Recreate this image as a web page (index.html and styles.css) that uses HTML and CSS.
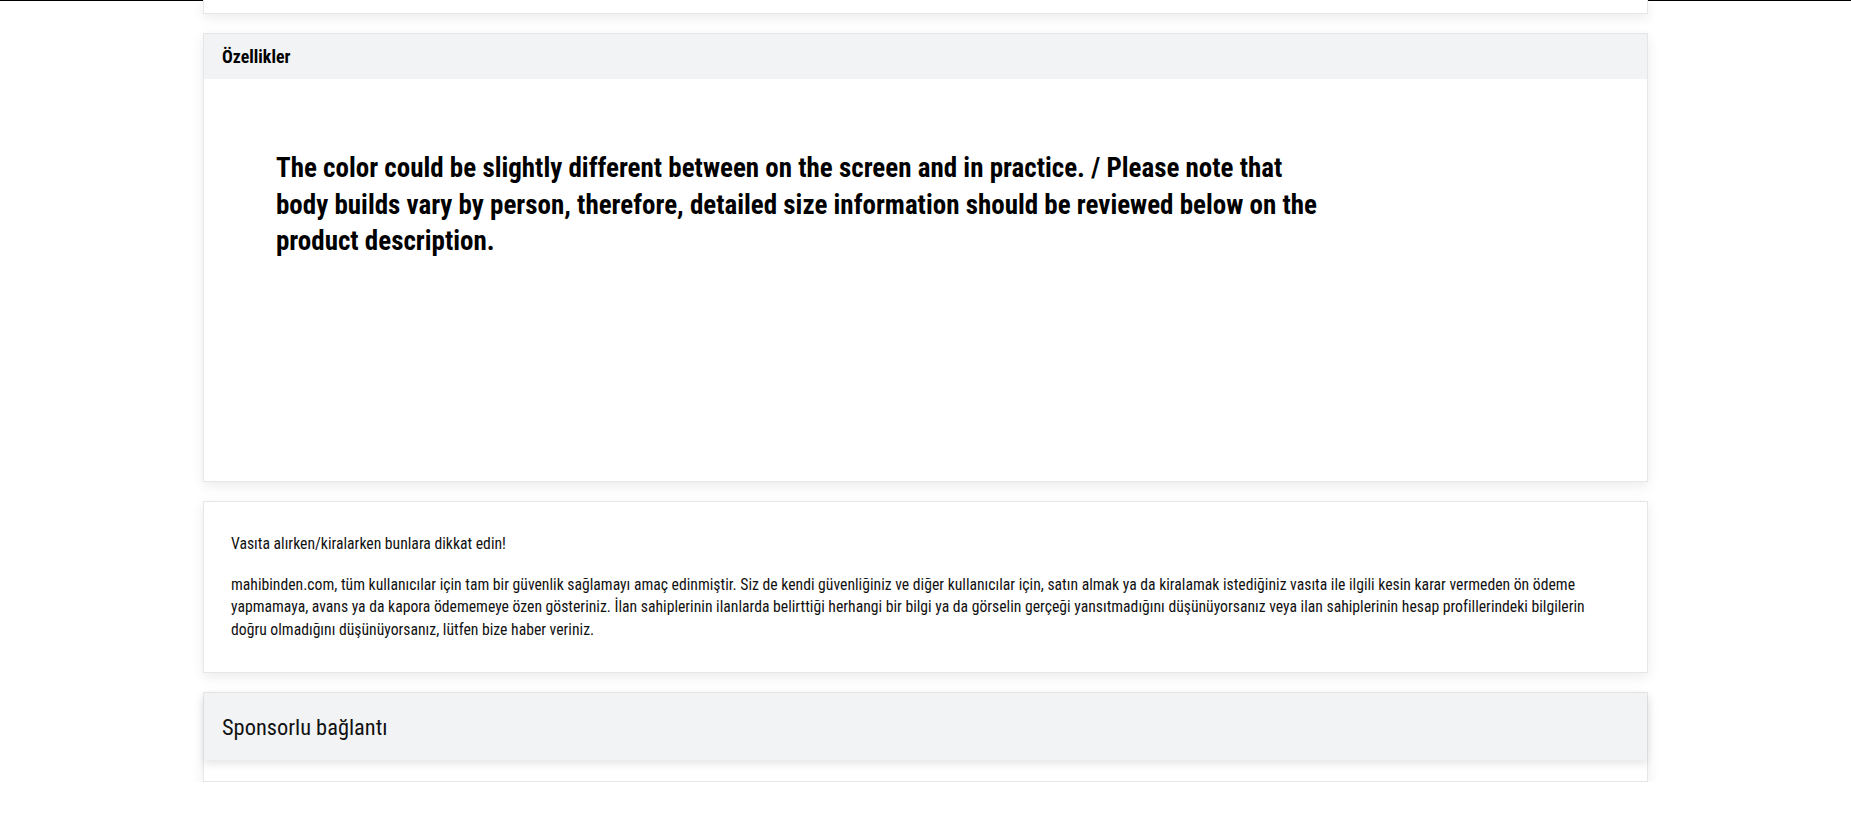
FILE: index.html
```html
<!DOCTYPE html>
<html lang="tr">
<head>
<meta charset="utf-8">
<title>Özellikler</title>
<link rel="stylesheet" href="styles.css">
</head>
<body>
<div class="topline"></div>
<main class="container">
  <section class="card card-top"></section>

  <section class="card">
    <header class="card-header"><h2>Özellikler</h2></header>
    <div class="card-body features">
      <p class="desc">The color could be slightly different between on the screen and in practice. / Please note that body builds vary by person, therefore, detailed size information should be reviewed below on the product description.</p>
    </div>
  </section>

  <section class="card notice">
    <p class="notice-title">Vasıta alırken/kiralarken bunlara dikkat edin!</p>
    <p class="notice-text">mahibinden.com, tüm kullanıcılar için tam bir güvenlik sağlamayı amaç edinmiştir. Siz de kendi güvenliğiniz ve diğer kullanıcılar için, satın almak ya da kiralamak istediğiniz vasıta ile ilgili kesin karar vermeden ön ödeme yapmamaya, avans ya da kapora ödememeye özen gösteriniz. İlan sahiplerinin ilanlarda belirttiği herhangi bir bilgi ya da görselin gerçeği yansıtmadığını düşünüyorsanız veya ilan sahiplerinin hesap profillerindeki bilgilerin doğru olmadığını düşünüyorsanız, lütfen bize haber veriniz.</p>
  </section>

  <section class="card sponsor">
    <header class="sponsor-header"><h3>Sponsorlu bağlantı</h3></header>
  </section>
</main>
</body>
</html>
```

FILE: styles.css
```css
* { box-sizing: border-box; }
html, body { margin: 0; padding: 0; background: #fff; }
body {
  font-family: "Roboto Condensed", "Roboto", "Liberation Sans", sans-serif;
  color: #111;
}
.topline { height: 1px; background: #000; }
.container {
  width: 1445px;
  margin: 0 auto;
  display: flex;
  flex-direction: column;
  gap: 19px;
}
.card {
  background: #fff;
  border: 1px solid #e6e6e6;
  box-shadow: 0 4px 12px rgba(0,0,0,0.08);
}
.card-top { height: 14px; margin-top: -1px; border-top: none; }
.card-header {
  background: #f2f3f5;
  height: 45px;
  display: flex;
  align-items: center;
  padding: 0 18px;
}
.card-header h2 { margin: 0; font-size: 17.9px; font-weight: 700; color: #000; }
.features { height: 402px; padding: 71px 72px 0; }
.desc {
  margin: 0;
  max-width: 1050px;
  font-size: 27px;
  font-weight: 700;
  line-height: 36.5px;
  color: #000;
}
.notice { padding: 31px 26px 31px 27px; }
.notice-title { margin: 0 0 18px; font-size: 15.7px; line-height: 22.5px; }
.notice-text { margin: 0; font-size: 15.7px; line-height: 22.5px; }
.sponsor { height: 90px; }
.sponsor-header {
  background: #f2f3f5;
  height: 67px;
  display: flex;
  align-items: center;
  padding: 0 18px;
  box-shadow: 0 4px 8px rgba(0,0,0,0.1);
}
.sponsor-header h3 { margin: 0; font-size: 22.4px; font-weight: 400; color: #111; }
```
